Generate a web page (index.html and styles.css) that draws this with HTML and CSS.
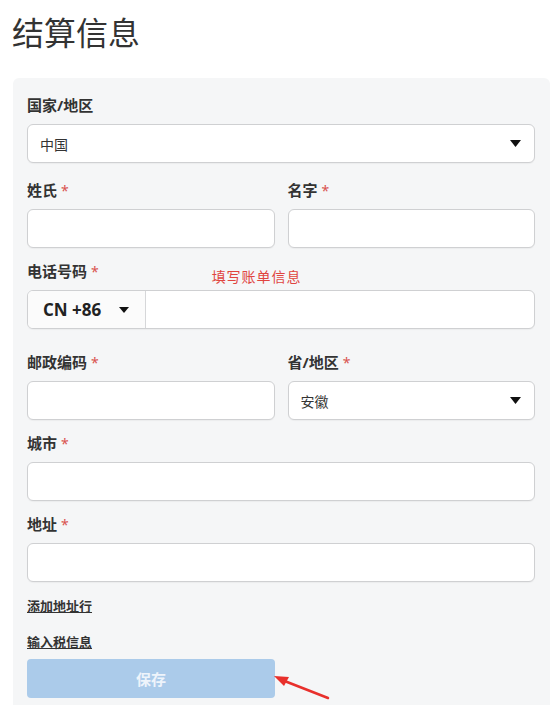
FILE: index.html
```html
<!DOCTYPE html>
<html lang="zh-CN">
<head>
    <meta charset="UTF-8">
    <meta name="viewport" content="width=device-width, initial-scale=1.0">
    <title>结算信息</title>
    <link rel="stylesheet" href="styles.css">
</head>
<body>

    <h1 class="page-title">结算信息</h1>

    <div class="billing-card">
        <!-- 国家/地区 -->
        <div class="field field-first">
            <label class="field-label">国家/地区</label>
            <div class="select-box">
                <span>中国</span>
                <svg class="caret" width="11" height="7" viewBox="0 0 11 7"><path d="M0 0H11L5.5 7Z" fill="#111"/></svg>
            </div>
        </div>

        <!-- 姓名 -->
        <div class="field-row">
            <div class="field">
                <label class="field-label">姓氏 <span class="req">*</span></label>
                <div class="text-box"></div>
            </div>
            <div class="field">
                <label class="field-label">名字 <span class="req">*</span></label>
                <div class="text-box"></div>
            </div>
        </div>

        <!-- 电话 -->
        <div class="field field-phone">
            <label class="field-label">电话号码 <span class="req">*</span><span class="hint">填写账单信息</span></label>
            <div class="phone-box">
                <div class="phone-code">
                    <span>CN +86</span>
                    <svg class="caret-sm" width="10" height="6" viewBox="0 0 10 6"><path d="M0 0H10L5 6Z" fill="#111"/></svg>
                </div>
                <div class="phone-input"></div>
            </div>
        </div>

        <div class="field-row">
            <div class="field">
                <label class="field-label">邮政编码 <span class="req">*</span></label>
                <div class="text-box"></div>
            </div>
            <div class="field">
                <label class="field-label">省/地区 <span class="req">*</span></label>
                <div class="select-box">
                    <span>安徽</span>
                    <svg class="caret" width="11" height="7" viewBox="0 0 11 7"><path d="M0 0H11L5.5 7Z" fill="#111"/></svg>
                </div>
            </div>
        </div>

        <div class="field">
            <label class="field-label">城市 <span class="req">*</span></label>
            <div class="text-box"></div>
        </div>

        <div class="field">
            <label class="field-label">地址 <span class="req">*</span></label>
            <div class="text-box"></div>
        </div>

        <!-- 链接 -->
        <a class="text-link" href="#">添加地址行</a>
        <a class="text-link" href="#">输入税信息</a>

        <div class="save-wrap">
            <button class="save-btn" type="button">保存</button>
            <!-- 标注箭头 -->
            <svg class="arrow-mark" width="64" height="28" viewBox="0 0 64 28">
                <path d="M56 25L10 7" stroke="#e8302c" stroke-width="2.5" stroke-linecap="round"/>
                <path d="M2 3L17 4L12 13Z" fill="#e8302c"/>
            </svg>
        </div>
    </div>

</body>
</html>
```

FILE: styles.css
```css
/* 页面基础 */
body {
    margin: 0;
    padding: 0 5px 0 13px;
    font-family: "Noto Sans", "Noto Sans CJK SC", sans-serif;
    color: #333;
    background: #fff;
    overflow: hidden;
}

.page-title {
    margin: 13px 0 0 -1px;
    font-size: 32px;
    font-weight: 400;
    line-height: 40px;
    color: #333;
}

/* 卡片 */
.billing-card {
    margin-top: 25px;
    background-color: #f5f6f7;
    border-radius: 6px;
    padding: 17px 15px 30px 14px;
}

.field {
    margin-bottom: 13px;
}

.field-first {
    margin-bottom: 17px;
}

.field-phone {
    margin-bottom: 23px;
}

.field-row {
    display: grid;
    grid-template-columns: 1fr 1fr;
    column-gap: 13px;
}

.field-label {
    display: block;
    height: 20px;
    font-size: 15px;
    font-weight: 700;
    line-height: 20px;
    margin-bottom: 9px;
    color: #333;
}

.req {
    color: #d9534f;
    font-weight: 400;
    font-size: 14px;
}

.hint {
    position: relative;
    top: 5px;
    margin-left: 113px;
    font-size: 14px;
    letter-spacing: 1px;
    font-weight: 400;
    color: #e0453f;
}

/* 输入框 */
.text-box,
.select-box,
.phone-box {
    box-sizing: border-box;
    height: 39px;
    background: #fff;
    border: 1px solid #cfd0d2;
    border-radius: 6px;
    box-shadow: 0 1px 1px rgba(0, 0, 0, 0.04);
}

.select-box {
    display: flex;
    align-items: center;
    justify-content: space-between;
    padding: 0 13px 0 12px;
    font-size: 14px;
    color: #333;
}

.phone-box {
    display: flex;
    overflow: hidden;
}

.phone-code {
    display: flex;
    align-items: center;
    gap: 18px;
    width: 118px;
    box-sizing: border-box;
    padding-left: 15px;
    background: #fbfbfb;
    border-right: 1px solid #d6d7d9;
    font-family: "Open Sans", sans-serif;
    font-weight: 700;
    font-size: 17px;
    color: #222;
}

.phone-input {
    flex: 1;
}

/* 链接 */
.text-link {
    display: block;
    width: max-content;
    font-size: 13px;
    font-weight: 700;
    line-height: 18px;
    color: #333;
    text-decoration: underline;
    margin-top: 15px;
}

.text-link + .text-link {
    margin-top: 18px;
}

/* 保存按钮 */
.save-wrap {
    position: relative;
    margin-top: 8px;
}

.save-btn {
    display: block;
    width: calc(50% - 6px);
    height: 39px;
    border: none;
    border-radius: 4px;
    background-color: #abcbea;
    color: #eef4fb;
    font-family: "Noto Sans CJK SC", sans-serif;
    font-size: 15px;
    font-weight: 700;
}

.arrow-mark {
    position: absolute;
    left: 245px;
    top: 14px;
}
```
